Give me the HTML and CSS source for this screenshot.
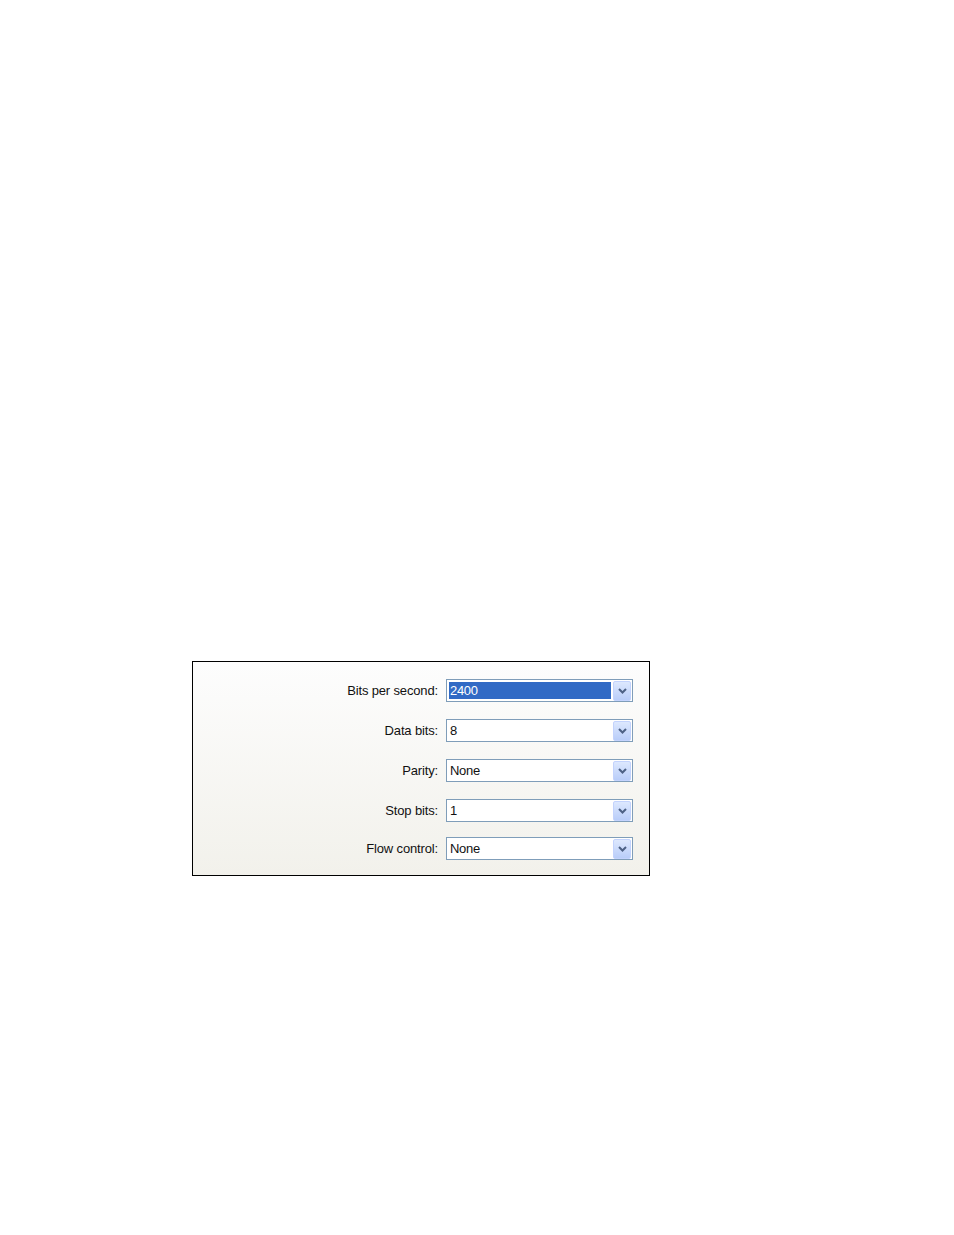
FILE: index.html
```html
<!DOCTYPE html>
<html>
<head>
<meta charset="utf-8">
<link rel="stylesheet" href="styles.css">
</head>
<body>
<div class="page">
  <div class="frame">
    <div class="row">
      <span class="label">Bits per second:</span>
      <div class="select"><span class="value selected">2400</span><span class="btn"><svg width="9" height="6" viewBox="0 0 9 6"><path d="M1 1 L4.5 4.5 L8 1" fill="none" stroke="#4d6185" stroke-width="2"/></svg></span></div>
    </div>
    <div class="row">
      <span class="label">Data bits:</span>
      <div class="select"><span class="value">8</span><span class="btn"><svg width="9" height="6" viewBox="0 0 9 6"><path d="M1 1 L4.5 4.5 L8 1" fill="none" stroke="#4d6185" stroke-width="2"/></svg></span></div>
    </div>
    <div class="row">
      <span class="label">Parity:</span>
      <div class="select"><span class="value">None</span><span class="btn"><svg width="9" height="6" viewBox="0 0 9 6"><path d="M1 1 L4.5 4.5 L8 1" fill="none" stroke="#4d6185" stroke-width="2"/></svg></span></div>
    </div>
    <div class="row">
      <span class="label">Stop bits:</span>
      <div class="select"><span class="value">1</span><span class="btn"><svg width="9" height="6" viewBox="0 0 9 6"><path d="M1 1 L4.5 4.5 L8 1" fill="none" stroke="#4d6185" stroke-width="2"/></svg></span></div>
    </div>
    <div class="row last">
      <span class="label">Flow control:</span>
      <div class="select"><span class="value">None</span><span class="btn"><svg width="9" height="6" viewBox="0 0 9 6"><path d="M1 1 L4.5 4.5 L8 1" fill="none" stroke="#4d6185" stroke-width="2"/></svg></span></div>
    </div>
  </div>
</div>
</body>
</html>
```

FILE: styles.css
```css
html, body {
  margin: 0;
  padding: 0;
  background: #ffffff;
}
.page {
  padding-top: 661px;
  padding-left: 192px;
}
.frame {
  width: 456px;
  height: 196px;
  border: 1px solid #000000;
  background: linear-gradient(#fdfdfd, #f2f1eb);
  padding-top: 17px;
  font-family: "Liberation Sans", Arial, sans-serif;
  font-size: 13px;
  color: #111111;
}
.row {
  display: flex;
  align-items: center;
  height: 23px;
  margin-bottom: 17px;
}
.row.last {
  margin-top: -2px;
}
.label {
  width: 245px;
  text-align: right;
  padding-right: 8px;
  letter-spacing: -0.15px;
}
.select {
  width: 185px;
  height: 21px;
  border: 1px solid #7f9db9;
  background: #ffffff;
  display: flex;
  align-items: center;
}
.value {
  flex: 1;
  height: 17px;
  line-height: 17px;
  margin-left: 2px;
  padding-left: 1px;
  margin-right: 2px;
  letter-spacing: -0.3px;
}
.value.selected {
  background: #316ac5;
  color: #ffffff;
}
.btn {
  width: 18px;
  height: 20px;
  margin-right: 1px;
  border: 1px solid #c3d3fd;
  box-sizing: border-box;
  border-radius: 2px;
  background: linear-gradient(#dde8fe, #b9cdf9);
  display: flex;
  align-items: center;
  justify-content: center;
}
.btn svg {
  display: block;
}
```
